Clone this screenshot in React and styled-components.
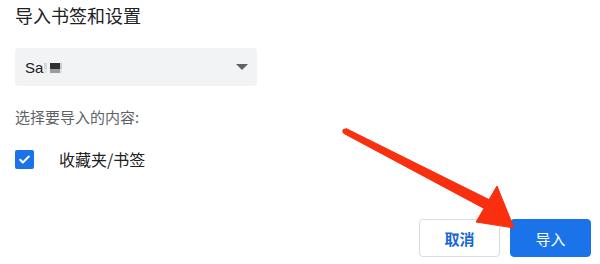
import React from "react";
import styled, { createGlobalStyle } from "styled-components";

const GlobalStyle = createGlobalStyle`
  html, body {
    margin: 0;
    padding: 0;
    background: #ffffff;
  }
  body {
    font-family: "Noto Sans CJK SC", "Liberation Sans", sans-serif;
  }
`;

const Page = styled.div`
  position: relative;
  width: 600px;
  height: 264px;
  overflow: hidden;
  background: #ffffff;
  box-sizing: border-box;
  padding: 2px 9px 7px 15px;
  display: flex;
  flex-direction: column;
`;

const Title = styled.h1`
  margin: 0;
  font-size: 18px;
  line-height: 26px;
  font-weight: 400;
  color: #202124;
`;

const Select = styled.div`
  margin-top: 20px;
  width: 242px;
  height: 38px;
  box-sizing: border-box;
  padding: 0 9px 0 10px;
  background: #f1f3f4;
  border-radius: 4px;
  display: flex;
  align-items: center;
  justify-content: space-between;
  font-family: "Liberation Sans", "Noto Sans CJK SC", sans-serif;
  font-size: 15px;
  color: #202124;
`;

const SelectValue = styled.span`
  display: flex;
  align-items: center;
`;

/* redacted part of the browser name */
const Mosaic = styled.span`
  display: inline-block;
  width: 20px;
  height: 10px;
  margin-left: 1px;
  margin-top: 1px;
  background:
    linear-gradient(180deg, transparent 0 6px, rgba(241, 243, 244, 0.55) 6px),
    linear-gradient(90deg, #d4d6d9 0 3px, transparent 3px 6px, #303134 6px 16px, #c9cbce 16px 18px, transparent 18px);
`;

const Caret = styled.span`
  width: 0;
  height: 0;
  border-left: 6px solid transparent;
  border-right: 6px solid transparent;
  border-top: 6px solid #5f6368;
`;

const SectionLabel = styled.div`
  margin-top: 21px;
  font-size: 15px;
  line-height: 20px;
  color: #5f6368;
`;

const CheckRow = styled.label`
  margin-top: 20px;
  display: flex;
  align-items: center;
  gap: 25px;
  font-size: 16px;
  color: #202124;
`;

const Box = styled.span`
  width: 19px;
  height: 19px;
  border-radius: 2px;
  background: #1a73e8;
  display: flex;
  align-items: center;
  justify-content: center;
`;

const Actions = styled.div`
  margin-top: auto;
  display: flex;
  justify-content: flex-end;
  gap: 10px;
`;

const Button = styled.button`
  width: 81px;
  height: 38px;
  border-radius: 4px;
  font-family: "Noto Sans CJK SC", sans-serif;
  font-size: 15px;
  font-weight: ${(p) => (p.$primary ? 400 : 600)};
  border: 1px solid ${(p) => (p.$primary ? "#1a73e8" : "#dadce0")};
  background: ${(p) => (p.$primary ? "#1a73e8" : "#ffffff")};
  color: ${(p) => (p.$primary ? "#ffffff" : "#1967d2")};
  padding: 0;
`;

const Arrow = styled.svg`
  position: absolute;
  left: 0;
  top: 0;
  pointer-events: none;
`;

export default function App() {
  return (
    <>
      <GlobalStyle />
      <Page>
        <Title>导入书签和设置</Title>
        <Select>
          <SelectValue>
            Sa
            <Mosaic />
          </SelectValue>
          <Caret />
        </Select>
        <SectionLabel>选择要导入的内容:</SectionLabel>
        <CheckRow>
          <Box>
            <svg width="13" height="13" viewBox="0 0 24 24">
              <path d="M4 12.5l5 5L20 6.5" fill="none" stroke="#fff" strokeWidth="3.6" strokeLinecap="round" strokeLinejoin="round" />
            </svg>
          </Box>
          收藏夹/书签
        </CheckRow>
        <Actions>
          <Button>取消</Button>
          <Button $primary>导入</Button>
        </Actions>
        <Arrow width="600" height="264" viewBox="0 0 600 264">
          <polygon
            points="346.2,128.6 489,199.6 497,186 514,228 476,222 484,208.4 343.8,133.4"
            fill="#f8300f"
            strokeLinejoin="round"
            stroke="#f8300f"
            strokeWidth="1"
          />
          <circle cx="345" cy="131" r="2.6" fill="#f8300f" />
        </Arrow>
      </Page>
    </>
  );
}
